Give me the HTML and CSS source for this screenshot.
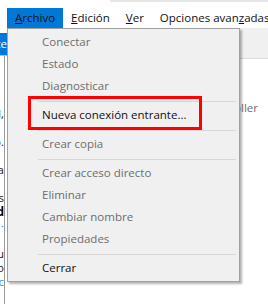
FILE: index.html
```html
<!DOCTYPE html>
<html lang="es">
<head>
  <meta charset="UTF-8">
  <title>Conexiones de red</title>
  <link rel="stylesheet" href="styles.css">
</head>
<body>
<div class="window">
  <div class="titlebar"><div class="titlebar-edge"></div></div>
  <nav class="menubar">
    <span class="menu-item active"><u>A</u>rchivo</span>
    <span class="menu-item"><u>E</u>dición</span>
    <span class="menu-item"><u>V</u>er</span>
    <span class="menu-item">Opciones avan<u>z</u>adas</span>
  </nav>
  <div class="workspace">
    <div class="sidebar">
      <div class="side-sel"><span>Ethernete</span></div>
      <div class="side-lines">
        <div class="side-line"><span>Red,</span></div>
        <div class="side-line"></div>
        <div class="side-line"><span>Conectado.</span></div>
        <div class="side-line"></div>
        <div class="side-line"><span>Wi-Fi a</span></div>
        <div class="side-line"></div>
        <div class="side-line"><span>Redes</span></div>
        <div class="side-line bold"><span>Ethernet d</span></div>
        <div class="side-line blue"><span>·</span></div>
        <div class="side-line"></div>
        <div class="side-line"><span>Bluetooth u</span></div>
        <div class="side-line"><span>No conectado</span></div>
        <div class="side-line blue"><span>c</span></div>
      </div>
    </div>
    <div class="main">
      <div class="toolbar"></div>
      <div class="adapter"><span>Realtek PCIe GbE Family Controller</span></div>
    </div>
  </div>
</div>

<div class="dropdown">
  <div class="item disabled">Conectar</div>
  <div class="item disabled">Estado</div>
  <div class="item disabled">Diagnosticar</div>
  <div class="sep"></div>
  <div class="item">Nueva conexión entrante...</div>
  <div class="sep"></div>
  <div class="item disabled">Crear copia</div>
  <div class="sep"></div>
  <div class="item disabled">Crear acceso directo</div>
  <div class="item disabled">Eliminar</div>
  <div class="item disabled">Cambiar nombre</div>
  <div class="item disabled">Propiedades</div>
  <div class="sep"></div>
  <div class="item">Cerrar</div>
</div>
<div class="callout"></div>
</body>
</html>
```

FILE: styles.css
```css
body { margin: 0; width: 268px; height: 304px; overflow: hidden; position: relative;
  background: #fff; color: #000; font-family: "Open Sans", "Noto Sans", sans-serif; font-size: 11.5px; }

.titlebar { height: 8px; }
.titlebar-edge { margin-left: 110px; height: 2px; background: #e6e6e6; }

.menubar { display: flex; height: 20px; padding-left: 7px; }
.menu-item { padding: 0 8px; line-height: 20px; white-space: nowrap; color: #111; }
.menu-item.active { background: #0078d7; }

.workspace { display: flex; height: 276px; }
.sidebar { width: 7px; flex: none; overflow: hidden; }
.side-sel { margin-top: 5px; height: 22px; line-height: 22px; background: #0078d7; color: #fff;
  display: flex; justify-content: flex-end; border-bottom: 1px solid #bcbcbc; white-space: nowrap; }
.side-lines { width: 4px; height: 100%; border-right: 1px solid #9a9a9a; padding-top: 51px; }
.side-line { height: 14px; line-height: 14px; display: flex; justify-content: flex-end;
  white-space: nowrap; color: #222; }
.side-line.bold { font-weight: bold; color: #000; }
.side-line.blue { color: #3a8ee6; }

.main { flex: 1; display: flex; flex-direction: column; }
.toolbar { height: 30px; background: #f0f0f0; border-bottom: 1px solid #dcdcdc; }
.adapter { margin-top: 41px; line-height: 16px; padding-right: 10px; color: #6d6d6d;
  display: flex; justify-content: flex-end; white-space: nowrap; }

.dropdown { position: absolute; left: 7px; top: 28px; width: 233px; height: 254px;
  box-sizing: border-box; padding: 2px 0; background: #f0f0f0;
  border: 1px solid #a0a0a0; box-shadow: 2px 2px 2px rgba(0,0,0,0.3); }
.item { height: 22px; line-height: 22px; padding-left: 34px; white-space: nowrap; color: #111; }
.item.disabled { color: #6d6d6d; }
.sep { height: 1px; margin: 4px 3px 2px 30px; background: #d7d7d7; }

.callout { position: absolute; left: 28px; top: 96px; width: 174px; height: 34px;
  box-sizing: border-box; border: 3px solid #ff0000; }
```
